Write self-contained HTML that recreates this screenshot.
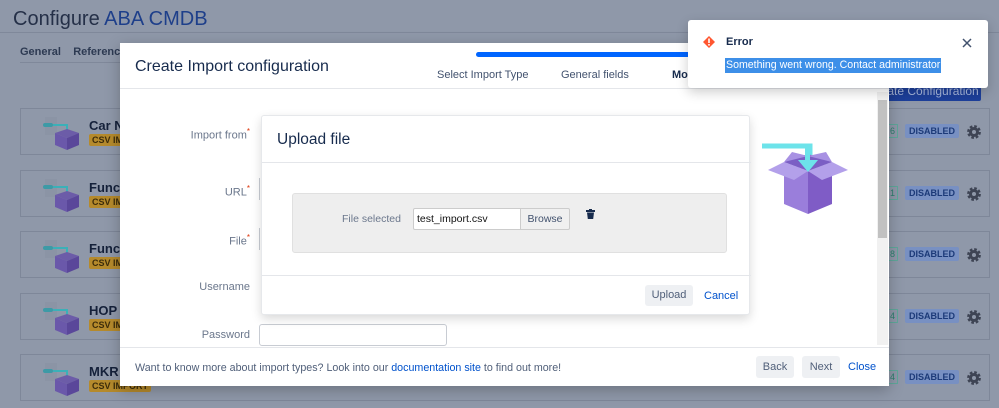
<!DOCTYPE html>
<html><head><meta charset="utf-8">
<style>
*{margin:0;padding:0;box-sizing:border-box}
body{width:999px;height:408px;overflow:hidden;background:#8f98a9;font-family:"Liberation Sans",sans-serif;position:relative;color:#172b4d}
.a{position:absolute}
.card{position:absolute;left:20px;width:970px;height:47px;border:1px solid #7e8799;background:#8f98a9}
.ct{position:absolute;left:68px;top:9px;font-weight:bold;font-size:13px;color:#15213a}
.csv{position:absolute;left:68px;top:25px;background:#b58a2c;color:#3c2c0a;font-size:9px;font-weight:bold;padding:1px 3px;border-radius:2px}
.dis{position:absolute;left:884px;top:15px;background:#7890c2;color:#1c3a78;font-size:9px;font-weight:bold;padding:2px 4px;border-radius:2px}
.num{position:absolute;left:866px;top:15px;border:1px solid #5fa79a;color:#2c7f6d;font-size:9px;padding:1px 2px}
.gear{position:absolute;left:945px;top:15px}
.lbl{position:absolute;right:749px;font-size:11px;color:#6b778c;text-align:right}
.lbl sup{color:#de350b;font-size:8px}
.btn{position:absolute;background:#eef0f3;border-radius:3px;font-size:11px;color:#505f79;text-align:center}
</style></head><body>
<div class="a" style="left:13px;top:8px;font-size:20px;color:#253048">Configure <span style="color:#1e3f8a">ABA CMDB</span></div>
<div class="a" style="left:0;top:32px;width:999px;height:1px;background:#7f889a"></div>
<div class="a" style="left:20px;top:46px;font-size:11px;color:#2d3a52;font-weight:bold">General&nbsp;&nbsp;&nbsp;&nbsp;Reference</div>
<div class="a" style="left:20px;top:62px;width:110px;height:1px;background:#7f889a"></div>
<div class="a" style="left:860px;top:80px;width:121px;height:21px;background:#1d3f9a;border-radius:2px;color:#a9b8dd;font-size:12px;padding:4px 0 0 8px;white-space:nowrap;overflow:hidden">Create Configuration</div>

<svg width="0" height="0" style="position:absolute"><defs>
<g id="ic"><rect x="12" y="0" width="12" height="18" fill="#8b94a5"/><rect x="10" y="6" width="10" height="4" rx="2" fill="#3d9aa6"/><path d="M20 8h14v8" stroke="#3bb0b8" stroke-width="2" fill="none"/><path d="M22 16l12-4 12 4-12 5z" fill="#6c5ca8"/><path d="M22 16l12 5v12l-12-5z" fill="#6a58aa"/><path d="M46 16l-12 5v12l12-5z" fill="#5a479a"/></g>
<g id="gr"><circle cx="8" cy="8" r="5.6" fill="none" stroke="#3e4454" stroke-width="2.6" stroke-dasharray="2.6 1.8"/><circle cx="8" cy="8" r="5" fill="#3e4454"/><circle cx="8" cy="8" r="2" fill="#8f98a9"/></g>
</defs></svg>

<div class="card" style="top:108px"><svg class="a" style="left:12px;top:8px" width="50" height="34"><use href="#ic"/></svg><div class="ct">Car N</div><div class="csv">CSV IMPORT</div><div class="num">6</div><div class="dis">DISABLED</div><svg class="gear" width="16" height="16"><use href="#gr"/></svg></div>
<div class="card" style="top:170px"><svg class="a" style="left:12px;top:8px" width="50" height="34"><use href="#ic"/></svg><div class="ct">Funct</div><div class="csv">CSV IMPORT</div><div class="num">1</div><div class="dis">DISABLED</div><svg class="gear" width="16" height="16"><use href="#gr"/></svg></div>
<div class="card" style="top:231px"><svg class="a" style="left:12px;top:8px" width="50" height="34"><use href="#ic"/></svg><div class="ct">Funct</div><div class="csv">CSV IMPORT</div><div class="num">8</div><div class="dis">DISABLED</div><svg class="gear" width="16" height="16"><use href="#gr"/></svg></div>
<div class="card" style="top:293px"><svg class="a" style="left:12px;top:8px" width="50" height="34"><use href="#ic"/></svg><div class="ct">HOP A</div><div class="csv">CSV IMPORT</div><div class="num">4</div><div class="dis">DISABLED</div><svg class="gear" width="16" height="16"><use href="#gr"/></svg></div>
<div class="card" style="top:354px"><svg class="a" style="left:12px;top:8px" width="50" height="34"><use href="#ic"/></svg><div class="ct">MKR A</div><div class="csv">CSV IMPORT</div><div class="num">4</div><div class="dis">DISABLED</div><svg class="gear" width="16" height="16"><use href="#gr"/></svg></div>

<!-- modal -->
<div class="a" style="left:120px;top:43px;width:769px;height:343px;background:#fff;box-shadow:0 4px 14px rgba(0,0,0,.25)">
 <div class="a" style="left:15px;top:15px;font-size:16px;color:#172b4d">Create Import configuration</div>
 <div class="a" style="left:356px;top:9px;width:214px;height:5px;background:#0065ff;border-radius:3px"></div>
 <div class="a" style="left:317px;top:26px;font-size:11px;color:#42526e">Select Import Type</div>
 <div class="a" style="left:441px;top:26px;font-size:11px;color:#42526e">General fields</div>
 <div class="a" style="left:552px;top:26px;font-size:11px;color:#172b4d;font-weight:bold">Mo</div>
 <div class="a" style="left:0;top:45px;width:769px;height:1px;background:#e4e6ea"></div>
 <div class="a" style="left:757px;top:49px;width:11px;height:253px;background:#f1f1f1"></div>
 <div class="a" style="left:758px;top:57px;width:9px;height:138px;background:#c1c1c1"></div>
 <div class="a" style="left:0;top:304px;width:769px;height:1px;background:#e4e6ea"></div>
 <div class="a" style="left:15px;top:319px;font-size:10.7px;color:#505f79;white-space:nowrap">Want to know more about import types? Look into our <span style="color:#0052cc">documentation site</span> to find out more!</div>
 <div class="btn" style="left:636px;top:313px;width:38px;height:22px;line-height:22px">Back</div>
 <div class="btn" style="left:682px;top:313px;width:38px;height:22px;line-height:22px">Next</div>
 <div class="a" style="left:728px;top:318px;font-size:11px;color:#0052cc">Close</div>
</div>
<div class="lbl" style="top:127px">Import from<sup>*</sup></div>
<div class="lbl" style="top:184px">URL<sup>*</sup></div>
<div class="lbl" style="top:233px">File<sup>*</sup></div>
<div class="lbl" style="top:281px">Username</div>
<div class="lbl" style="top:329px">Password</div>
<div class="a" style="left:259px;top:324px;width:188px;height:22px;border:1px solid #c8ccd3;border-radius:3px"></div>
<div class="a" style="left:259px;top:178px;width:3px;height:22px;border-left:1px solid #c8ccd3"></div>
<div class="a" style="left:259px;top:228px;width:3px;height:22px;border-left:1px solid #c8ccd3"></div>

<svg class="a" style="left:760px;top:140px" width="92" height="78">
 <path d="M2 6h48v16" stroke="#6de3ea" stroke-width="5" fill="none"/>
 <path d="M24 22l24-8 24 8-24 9z" fill="#7b5fc4"/>
 <path d="M24 22l24 9v43l-24-10z" fill="#9a7edb"/>
 <path d="M72 22l-24 9v43l24-10z" fill="#7f5cc6"/>
 <path d="M24 22l24 9-14 9-26-10z" fill="#b3a0ea"/>
 <path d="M72 22l-24 9 14 9 26-10z" fill="#b3a0ea"/>
 <path d="M24 22l8-10 16 4-24 6zM72 22l-6-10-18 4z" fill="#a891e3"/>
 <path d="M38 20h20l-10 12z" fill="#6de3ea"/>
 <rect x="45" y="4" width="5" height="18" fill="#6de3ea"/>
</svg>

<!-- upload dialog -->
<div class="a" style="left:261px;top:115px;width:489px;height:200px;background:#fff;border:1px solid #e6e8eb;border-radius:3px;box-shadow:0 4px 10px rgba(0,0,0,.15)">
 <div class="a" style="left:15px;top:15px;font-size:15.5px;color:#172b4d">Upload file</div>
 <div class="a" style="left:0;top:46px;width:489px;height:1px;background:#e4e6ea"></div>
 <div class="a" style="left:30px;top:77px;width:435px;height:60px;background:#eeeeee;border:1px solid #e0e0e0;border-radius:3px"></div>
 <div class="a" style="left:80px;top:97px;font-size:10.5px;color:#6b778c">File selected</div>
 <div class="a" style="left:151px;top:92px;width:108px;height:22px;background:#fff;border:1px solid #ccc;border-radius:2px 0 0 2px;font-size:10.5px;padding:4px 3px;color:#111">test_import.csv</div>
 <div class="a" style="left:258px;top:92px;width:50px;height:22px;background:#f0f0f0;border:1px solid #ccc;border-radius:0 2px 2px 0;font-size:10.5px;line-height:20px;text-align:center;color:#42526e">Browse</div>
 <svg class="a" style="left:324px;top:93px" width="10" height="11"><rect x="0" y="1" width="9" height="2" fill="#172b4d"/><rect x="3" y="0" width="3" height="2" fill="#172b4d"/><path d="M1 3.5h7l-0.8 6.5h-5.4z" fill="#172b4d"/></svg>
 <div class="a" style="left:0;top:159px;width:489px;height:1px;background:#e4e6ea"></div>
 <div class="btn" style="left:383px;top:169px;width:48px;height:21px;line-height:21px">Upload</div>
 <div class="a" style="left:442px;top:174px;font-size:11px;color:#0052cc">Cancel</div>
</div>

<!-- toast -->
<div class="a" style="left:688px;top:20px;width:300px;height:68px;background:#fff;border-radius:3px;box-shadow:0 4px 12px rgba(0,0,0,.2)">
 <svg class="a" style="left:15px;top:16px" width="12" height="12"><path d="M6 0l6 6-6 6-6-6z" fill="#ff5630"/><rect x="5.2" y="2.5" width="1.6" height="4.5" fill="#fff"/><rect x="5.2" y="8" width="1.6" height="1.6" fill="#fff"/></svg>
 <div class="a" style="left:38px;top:16px;font-size:11px;font-weight:bold;color:#172b4d">Error</div>
 <svg class="a" style="left:274px;top:18px" width="10" height="10"><path d="M1 1l8 8M9 1l-8 8" stroke="#42526e" stroke-width="1.5"/></svg>
 <div class="a" style="left:37px;top:38px;height:15px;background:#3d8fe8;color:#fff;font-size:10.6px;line-height:15px;padding:0 1px;white-space:nowrap">Something went wrong. Contact administrator</div>
</div>
</body></html>
